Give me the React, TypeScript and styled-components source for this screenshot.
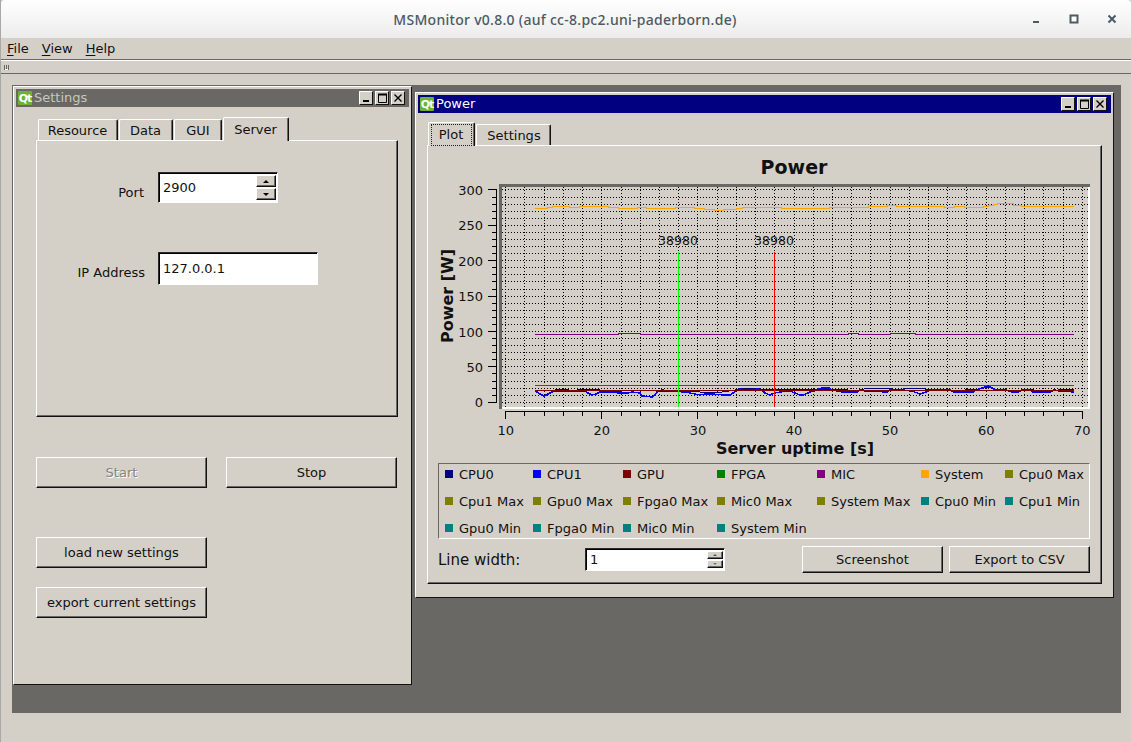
import React from "react";
import styled, { createGlobalStyle } from "styled-components";

const FACE = "#d4d0c8";
const SHADE = "#6a6864";

const GlobalStyle = createGlobalStyle`
  html, body { margin: 0; padding: 0; background: ${FACE}; }
  body { font-family: "DejaVu Sans", "Liberation Sans", sans-serif; font-size: 13px; color: #111; }
`;

const AppWindow = styled.div`
  width: 1131px;
  height: 742px;
  display: flex;
  flex-direction: column;
  box-sizing: border-box;
  background: ${FACE};
  border-left: 1px solid #a8a8a4;
  overflow: hidden;
`;
const TitleBar = styled.header`
  height: 38px;
  flex: none;
  position: relative;
  display: flex;
  align-items: center;
  justify-content: center;
  background: linear-gradient(#ffffff, #ececec);
  border-radius: 4px 4px 0 0;
  font-family: "Noto Sans", sans-serif;
  font-weight: 500;
  font-size: 14px;
  letter-spacing: 0.28px;
  color: #4c5a63;
`;
const TitleText = styled.span`
  padding-right: 2px;
`;
const WmControls = styled.div`
  position: absolute;
  top: 0;
  right: 0;
  height: 38px;
  display: flex;
`;
const WmButton = styled.div`
  width: 38px;
  height: 38px;
  display: flex;
  align-items: center;
  justify-content: center;
  color: #4c5a63;
`;
const MenuBar = styled.nav`
  height: 21px;
  flex: none;
  display: flex;
  align-items: center;
  gap: 13px;
  padding-left: 6px;
  border-bottom: 1px solid ${SHADE};
  box-sizing: content-box;
`;
const MenuItem = styled.span`
  font-size: 13px;
  u { text-underline-offset: 2px; }
`;
const ToolBar = styled.div`
  height: 12px;
  flex: none;
  display: flex;
  align-items: center;
  padding-left: 3px;
  border-top: 1px solid #fff;
  border-bottom: 1px solid ${SHADE};
`;
const Grip = styled.span`
  width: 5px;
  height: 5px;
  box-sizing: border-box;
  border-left: 1px solid ${SHADE};
  border-right: 1px solid ${SHADE};
  background: linear-gradient(90deg, transparent 1px, ${SHADE} 1px, ${SHADE} 2px, transparent 2px);
  box-shadow: inset 0 -1px #fff;
`;
const MdiArea = styled.main`
  position: relative;
  flex: 1;
  margin: 11px 10px 29px 11px;
  background: ${SHADE};
`;
const SubWindow = styled.section<{ $left: number; $top: number; $w: number; $h: number }>`
  position: absolute;
  left: ${(p) => p.$left}px;
  top: ${(p) => p.$top}px;
  width: ${(p) => p.$w}px;
  height: ${(p) => p.$h}px;
  box-sizing: border-box;
  padding: 2px;
  display: flex;
  flex-direction: column;
  background: ${FACE};
  border: 1px solid;
  border-color: #fff #111 #111 #fff;
`;
const SubTitle = styled.div<{ $active?: boolean }>`
  height: 18px;
  flex: none;
  display: flex;
  align-items: center;
  padding: 0 2px;
  gap: 2px;
  background: ${(p) => (p.$active ? "#000080" : SHADE)};
  color: ${(p) => (p.$active ? "#fff" : "#c9c6bf")};
  font-size: 13px;
`;
const QtLogo = styled.span`
  width: 14px;
  height: 14px;
  flex: none;
  display: flex;
  align-items: center;
  justify-content: center;
  background: #6ab42f;
  border-radius: 1px;
  color: #fff;
  font-weight: 700;
  font-size: 11px;
  letter-spacing: -1px;
`;
const SubTitleText = styled.span`
  flex: 1;
  padding-bottom: 2px;
`;
const SubButtons = styled.div`
  display: flex;
  gap: 2px;
  padding-right: 2px;
`;
const SubButton = styled.div`
  width: 14px;
  height: 14px;
  box-sizing: border-box;
  display: flex;
  align-items: center;
  justify-content: center;
  background: ${FACE};
  border: 1px solid;
  border-color: #fff #111 #111 #fff;
  color: #000;
`;
const SettingsBody = styled.div`
  flex: 1;
  display: flex;
  flex-direction: column;
  padding: 10px 11px 0 20px;
`;
const TabBar = styled.div<{ $inset: number }>`
  display: flex;
  align-items: flex-end;
  gap: 1px;
  padding-left: ${(p) => p.$inset}px;
  position: relative;
  z-index: 1;
`;
const Tab = styled.div<{ $active?: boolean; $w: number; $nudge?: number }>`
  width: ${(p) => p.$w}px;
  height: ${(p) => (p.$active ? 24 : 21)}px;
  margin-bottom: ${(p) => (p.$active ? -1 : 0)}px;
  box-sizing: border-box;
  display: flex;
  align-items: center;
  justify-content: center;
  padding-left: ${(p) => Math.max(p.$nudge ?? 0, 0)}px;
  padding-right: ${(p) => Math.max(-(p.$nudge ?? 0), 0)}px;
  background: ${FACE};
  border-top: 1px solid #fff;
  border-left: 1px solid #fff;
  border-right: 1px solid #111;
  border-top-left-radius: 2px;
  border-top-right-radius: 2px;
  box-shadow: inset -1px 0 ${SHADE};
  font-size: 13px;
`;
const FocusRect = styled.span`
  border: 1px dotted #222;
  padding: 2px 8px 3px 7px;
  line-height: 15px;
`;
const Pane = styled.div<{ $h: number }>`
  height: ${(p) => p.$h}px;
  box-sizing: border-box;
  border: 1px solid;
  border-color: #fff #111 #111 #fff;
  box-shadow: inset -1px -1px ${SHADE};
`;
const ServerForm = styled.div`
  display: flex;
  flex-direction: column;
  padding-top: 31px;
  gap: 49px;
`;
const FormRow = styled.div`
  display: flex;
  align-items: center;
`;
const FormLabel = styled.label<{ $w: number; $drop: number }>`
  width: ${(p) => p.$w}px;
  margin-right: ${(p) => 121 - p.$w}px;
  padding-top: ${(p) => p.$drop}px;
  text-align: right;
  font-size: 13px;
`;
const Field = styled.div<{ $w: number; $h: number }>`
  width: ${(p) => p.$w}px;
  height: ${(p) => p.$h}px;
  box-sizing: border-box;
  display: flex;
  background: #fff;
  border: 1px solid;
  border-color: #2a2a2a #fff #fff #2a2a2a;
  box-shadow: inset 1px 1px #000;
  padding: 2px 1px 2px 4px;
  font-size: 13px;
  align-items: center;
`;
const FieldValue = styled.span`
  flex: 1;
  padding-bottom: 1px;
`;
const Steppers = styled.div`
  display: flex;
  flex-direction: column;
  align-self: stretch;
  gap: 1px;
`;
const Stepper = styled.div<{ $w: number }>`
  flex: 1;
  width: ${(p) => p.$w}px;
  box-sizing: border-box;
  display: flex;
  align-items: center;
  justify-content: center;
  background: ${FACE};
  border: 1px solid;
  border-color: #fff #111 #111 #fff;
  box-shadow: inset -1px -1px ${SHADE};
`;
const Arrow = styled.span<{ $up?: boolean; $size: number; $muted?: boolean }>`
  width: 0;
  height: 0;
  border-left: ${(p) => p.$size}px solid transparent;
  border-right: ${(p) => p.$size}px solid transparent;
  ${(p) =>
    p.$up
      ? `border-bottom: ${p.$size}px solid ${p.$muted ? "#555" : "#000"};`
      : `border-top: ${p.$size}px solid ${p.$muted ? "#777" : "#000"};`}
`;
const PushButton = styled.button<{ $w: number; $h: number }>`
  width: ${(p) => p.$w}px;
  height: ${(p) => p.$h}px;
  flex: none;
  padding: 0;
  box-sizing: border-box;
  background: ${FACE};
  border: 1px solid;
  border-color: #fff #111 #111 #fff;
  box-shadow: inset -1px -1px ${SHADE};
  font-family: inherit;
  font-size: 13px;
  color: #111;
  &:disabled {
    color: #85837e;
    text-shadow: 1px 1px 0 #fff;
  }
`;
const ButtonRow = styled.div`
  display: flex;
  gap: 19px;
  margin-top: 40px;
`;
const StackedButton = styled.div<{ $top: number }>`
  margin-top: ${(p) => p.$top}px;
`;
const PowerBody = styled.div`
  flex: 1;
  display: flex;
  flex-direction: column;
  padding: 9px 9px 0 9px;
`;
const PlotPane = styled(Pane)`
  padding: 2px 11px 0 10px;
  display: flex;
  flex-direction: column;
`;
const Chart = styled.svg`
  display: block;
  width: 652px;
  height: 312px;
  flex: none;
  overflow: visible;
`;
const Legend = styled.div`
  margin-top: 3px;
  height: 76px;
  box-sizing: border-box;
  border: 1px solid;
  border-color: ${SHADE} #fff #fff ${SHADE};
  padding: 0 0 0 6px;
  display: grid;
  grid-template-columns: 88px 90px 94px 100px 104px 84px 1fr;
  grid-auto-rows: 20px;
  row-gap: 7px;
`;
const LegendItem = styled.div`
  display: flex;
  align-items: center;
  gap: 6px;
  font-size: 13px;
  white-space: nowrap;
`;
const Swatch = styled.span<{ $color: string }>`
  width: 8px;
  height: 8px;
  flex: none;
  background: ${(p) => p.$color};
`;
const PlotControls = styled.div`
  margin-top: 7px;
  display: flex;
  align-items: center;
`;
const LineWidthLabel = styled.label`
  width: 147px;
  font-size: 15px;
`;
const ControlButtons = styled.div`
  margin-left: auto;
  display: flex;
  gap: 6px;
`;

const xOf = (t: number) => 505.7 + 9.61 * (t - 10);
const yOf = (v: number) => 402.3 - 0.7077 * v;
const range = (a: number, b: number, s: number) => {
  const r: number[] = [];
  for (let i = a; i <= b; i += s) r.push(i);
  return r;
};
const steps = (start: number, segs: [number, number][]) => {
  let x = start;
  const pts: string[] = [];
  segs.forEach(([end, y]) => {
    pts.push(`${x},${y}`, `${end},${y}`);
    x = end;
  });
  return pts.join(" ");
};
const line = (pts: [number, number][]) => pts.map((p) => p.join(",")).join(" ");

const ORANGE: [number, number][] = [
  [547, 208.5], [552, 207.5], [569, 206.5], [579, 207.5], [608, 206.5], [618, 207.5], [637, 208.5], [646, 207.5], [675, 208.5],
  [694, 207.5], [704, 208.5], [714, 209.5], [723, 210.5], [736, 209.5], [742, 208.5], [781, 207.5], [829, 208.5],
  [868, 207.5], [887, 206.5], [896, 205.5], [944, 206.5], [954, 207.5], [964, 206.5], [983, 207.5], [988, 206.5], [993, 205.5],
  [997, 204.5], [1013, 203.5], [1021, 205.5], [1074, 206.5],
];
const MAGENTA: [number, number][] = [
  [618, 334.5], [640, 333.5], [848, 334.5], [858, 333.5], [890, 334.5], [915, 333.5], [1074, 334.5],
];
const BLUE: [number, number][] = [
  [535, 391], [537, 392], [540, 394], [544, 396], [548, 394], [552, 392], [556, 391], [585, 391], [588, 393], [592, 395],
  [596, 394], [600, 392], [606, 392], [614, 392], [618, 393], [628, 393], [632, 392], [640, 393], [642, 396], [652, 397],
  [655, 395], [658, 391], [662, 390], [670, 391], [685, 392], [695, 394], [700, 395], [705, 394], [712, 394], [725, 395],
  [730, 395], [733, 393], [736, 391], [740, 389], [745, 390], [752, 390], [758, 389], [763, 391], [765, 393], [770, 395],
  [772, 394], [775, 393], [780, 392], [790, 391], [795, 393], [800, 395], [803, 395], [808, 393], [810, 392], [814, 391],
  [818, 389], [822, 388], [829, 388], [832, 390], [842, 392], [857, 392], [860, 390], [866, 391], [887, 392], [890, 390],
  [902, 390], [912, 391], [920, 394], [926, 392], [930, 390], [950, 390], [954, 392], [973, 392], [976, 390], [982, 388],
  [988, 386], [992, 388], [996, 390], [1006, 390], [1012, 392], [1018, 392], [1022, 390], [1030, 390], [1033, 392], [1050, 392],
  [1054, 390], [1060, 391], [1074, 392],
];
const NAVY: [number, number][] = [
  [535, 390], [552, 391], [555, 390], [556, 389], [566, 389], [572, 391], [582, 389], [600, 390], [610, 391], [622, 391],
  [640, 390], [656, 391], [665, 391], [690, 391], [700, 392], [722, 392], [735, 390], [742, 388], [760, 389], [800, 390],
  [818, 389], [828, 389], [848, 390], [860, 390], [868, 388], [888, 388], [895, 390], [912, 388], [925, 389], [942, 390],
  [965, 390], [980, 389], [988, 387], [996, 390], [1022, 390], [1026, 389], [1034, 390], [1058, 390], [1062, 389], [1074, 390],
];

const Qt = () => <QtLogo>Qt</QtLogo>;

const SubControls = () => (
  <SubButtons>
    <SubButton>
      <svg width="10" height="10" viewBox="0 0 10 10"><rect x="2" y="7" width="6" height="2" fill="#000" /></svg>
    </SubButton>
    <SubButton>
      <svg width="10" height="10" viewBox="0 0 10 10"><path d="M1 1.5H9.5V9.5H1.5V1.5" fill="none" stroke="#000" strokeWidth="1" /><path d="M1 1.5H10" stroke="#000" strokeWidth="2" /></svg>
    </SubButton>
    <SubButton>
      <svg width="10" height="10" viewBox="0 0 10 10"><path d="M1.5 1.5L8.5 8.5M8.5 1.5L1.5 8.5" stroke="#000" strokeWidth="1.4" /></svg>
    </SubButton>
  </SubButtons>
);

const legend: [string, string][] = [
  ["CPU0", "#000080"], ["CPU1", "#0000ff"], ["GPU", "#800000"], ["FPGA", "#008000"], ["MIC", "#800080"], ["System", "#ffa500"], ["Cpu0 Max", "#808000"],
  ["Cpu1 Max", "#808000"], ["Gpu0 Max", "#808000"], ["Fpga0 Max", "#808000"], ["Mic0 Max", "#808000"], ["System Max", "#808000"], ["Cpu0 Min", "#008080"], ["Cpu1 Min", "#008080"],
  ["Gpu0 Min", "#008080"], ["Fpga0 Min", "#008080"], ["Mic0 Min", "#008080"], ["System Min", "#008080"],
];

const PowerChart = () => (
  <Chart viewBox="438 148 652 312" fontFamily="'DejaVu Sans', sans-serif">
    <text x="794" y="174" textAnchor="middle" fontWeight="700" fontSize="19" fill="#111">Power</text>
    <text transform="translate(453 296) rotate(-90)" textAnchor="middle" fontWeight="700" fontSize="16" fill="#111">Power [W]</text>
    <text x="795" y="454" textAnchor="middle" fontWeight="700" fontSize="16" fill="#111">Server uptime [s]</text>

    <rect x="499" y="184" width="591" height="3" fill={SHADE} />
    <rect x="499" y="184" width="3" height="225" fill={SHADE} />
    <rect x="1088" y="187" width="2" height="222" fill="#fff" />
    <rect x="502" y="407" width="588" height="2" fill="#fff" />

    <g shapeRendering="crispEdges">
      {range(10, 70, 2).map((t) => (
        <line key={t} x1={xOf(t)} x2={xOf(t)} y1="187" y2="407" stroke="#000" strokeDasharray="1 2" />
      ))}
      {range(0, 300, 10).map((v) => (
        <line key={v} x1="502" x2="1088" y1={yOf(v)} y2={yOf(v)} stroke="#000" strokeDasharray="1 2" />
      ))}
      <polyline points={steps(535, ORANGE)} fill="none" stroke="#ffa500" />
      <polyline points={steps(535, MAGENTA)} fill="none" stroke="#800080" />
      <line x1="535" x2="1074" y1="385.5" y2="385.5" stroke="#008000" />
      <polyline points={line(NAVY)} fill="none" stroke="#000080" />
      <polyline points={line(BLUE)} fill="none" stroke="#0000ff" strokeWidth="1.5" />
      <line x1="535" x2="1074" y1="390.5" y2="390.5" stroke="#800000" />
      <line x1="678" x2="678" y1="252" y2="407" stroke="#00ff00" />
      <line x1="774" x2="774" y1="252" y2="407" stroke="#ff0000" />

      <line x1="496.5" x2="496.5" y1={yOf(300)} y2={yOf(0)} stroke="#000" />
      {range(0, 300, 10).map((v) => (
        <line key={v} x1={v % 50 === 0 ? 488 : 492} x2="497" y1={yOf(v)} y2={yOf(v)} stroke="#000" />
      ))}
      <line x1={xOf(10)} x2={xOf(70)} y1="411.5" y2="411.5" stroke="#000" />
      {range(10, 70, 2).map((t) => (
        <line key={t} x1={xOf(t)} x2={xOf(t)} y1="411" y2={t % 10 === 0 ? 419 : 416} stroke="#000" />
      ))}
    </g>

    <text x="678" y="245" textAnchor="middle" fontSize="12.5" fill="#111">38980</text>
    <text x="774" y="245" textAnchor="middle" fontSize="12.5" fill="#111">38980</text>
    {range(0, 300, 50).map((v) => (
      <text key={v} x="483" y={yOf(v) + 5} textAnchor="end" fontSize="13" fill="#111">{v}</text>
    ))}
    {range(10, 70, 10).map((t) => (
      <text key={t} x={xOf(t)} y="435" textAnchor="middle" fontSize="13" fill="#111">{t}</text>
    ))}
  </Chart>
);

export default function App() {
  return (
    <AppWindow>
      <GlobalStyle />
      <TitleBar>
        <TitleText>MSMonitor v0.8.0 (auf cc-8.pc2.uni-paderborn.de)</TitleText>
        <WmControls>
          <WmButton>
            <svg width="10" height="10" viewBox="0 0 10 10"><rect x="2" y="7" width="6" height="2" fill="currentColor" /></svg>
          </WmButton>
          <WmButton>
            <svg width="10" height="10" viewBox="0 0 10 10"><rect x="1.5" y="1.5" width="7" height="7" fill="#fff" stroke="currentColor" strokeWidth="2" /></svg>
          </WmButton>
          <WmButton>
            <svg width="10" height="10" viewBox="0 0 10 10"><path d="M1.5 1.5L8.5 8.5M8.5 1.5L1.5 8.5" stroke="currentColor" strokeWidth="2" /></svg>
          </WmButton>
        </WmControls>
      </TitleBar>
      <MenuBar>
        <MenuItem><u>F</u>ile</MenuItem>
        <MenuItem><u>V</u>iew</MenuItem>
        <MenuItem><u>H</u>elp</MenuItem>
      </MenuBar>
      <ToolBar><Grip /></ToolBar>
      <MdiArea>
        <SubWindow $left={1} $top={1} $w={399} $h={599}>
          <SubTitle>
            <Qt />
            <SubTitleText>Settings</SubTitleText>
            <SubControls />
          </SubTitle>
          <SettingsBody>
            <TabBar $inset={2}>
              <Tab $w={80} $nudge={-1}>Resource</Tab>
              <Tab $w={54} $nudge={-1}>Data</Tab>
              <Tab $w={48}>GUI</Tab>
              <Tab $w={66} $active $nudge={-1}>Server</Tab>
            </TabBar>
            <Pane $h={277}>
              <ServerForm>
                <FormRow>
                  <FormLabel $w={107} $drop={9}>Port</FormLabel>
                  <Field $w={120} $h={31}>
                    <FieldValue>2900</FieldValue>
                    <Steppers>
                      <Stepper $w={20}><Arrow $up $size={3} /></Stepper>
                      <Stepper $w={20}><Arrow $size={3} /></Stepper>
                    </Steppers>
                  </Field>
                </FormRow>
                <FormRow>
                  <FormLabel $w={108} $drop={7}>IP Address</FormLabel>
                  <Field $w={160} $h={33}>
                    <FieldValue>127.0.0.1</FieldValue>
                  </Field>
                </FormRow>
              </ServerForm>
            </Pane>
            <ButtonRow>
              <PushButton $w={171} $h={31} disabled>Start</PushButton>
              <PushButton $w={171} $h={31}>Stop</PushButton>
            </ButtonRow>
            <StackedButton $top={49}>
              <PushButton $w={171} $h={31}>load new settings</PushButton>
            </StackedButton>
            <StackedButton $top={19}>
              <PushButton $w={171} $h={31}>export current settings</PushButton>
            </StackedButton>
          </SettingsBody>
        </SubWindow>

        <SubWindow $left={403} $top={7} $w={699} $h={506}>
          <SubTitle $active>
            <Qt />
            <SubTitleText>Power</SubTitleText>
            <SubControls />
          </SubTitle>
          <PowerBody>
            <TabBar $inset={1}>
              <Tab $w={47} $active><FocusRect>Plot</FocusRect></Tab>
              <Tab $w={75} $nudge={1}>Settings</Tab>
            </TabBar>
            <PlotPane $h={439}>
              <PowerChart />
              <Legend>
                {legend.map(([name, color]) => (
                  <LegendItem key={name}>
                    <Swatch $color={color} />
                    {name}
                  </LegendItem>
                ))}
              </Legend>
              <PlotControls>
                <LineWidthLabel>Line width:</LineWidthLabel>
                <Field $w={140} $h={23}>
                  <FieldValue>1</FieldValue>
                  <Steppers>
                    <Stepper $w={16}><Arrow $up $size={2} $muted /></Stepper>
                    <Stepper $w={16}><Arrow $size={2} $muted /></Stepper>
                  </Steppers>
                </Field>
                <ControlButtons>
                  <PushButton $w={141} $h={27}>Screenshot</PushButton>
                  <PushButton $w={141} $h={27}>Export to CSV</PushButton>
                </ControlButtons>
              </PlotControls>
            </PlotPane>
          </PowerBody>
        </SubWindow>
      </MdiArea>
    </AppWindow>
  );
}
